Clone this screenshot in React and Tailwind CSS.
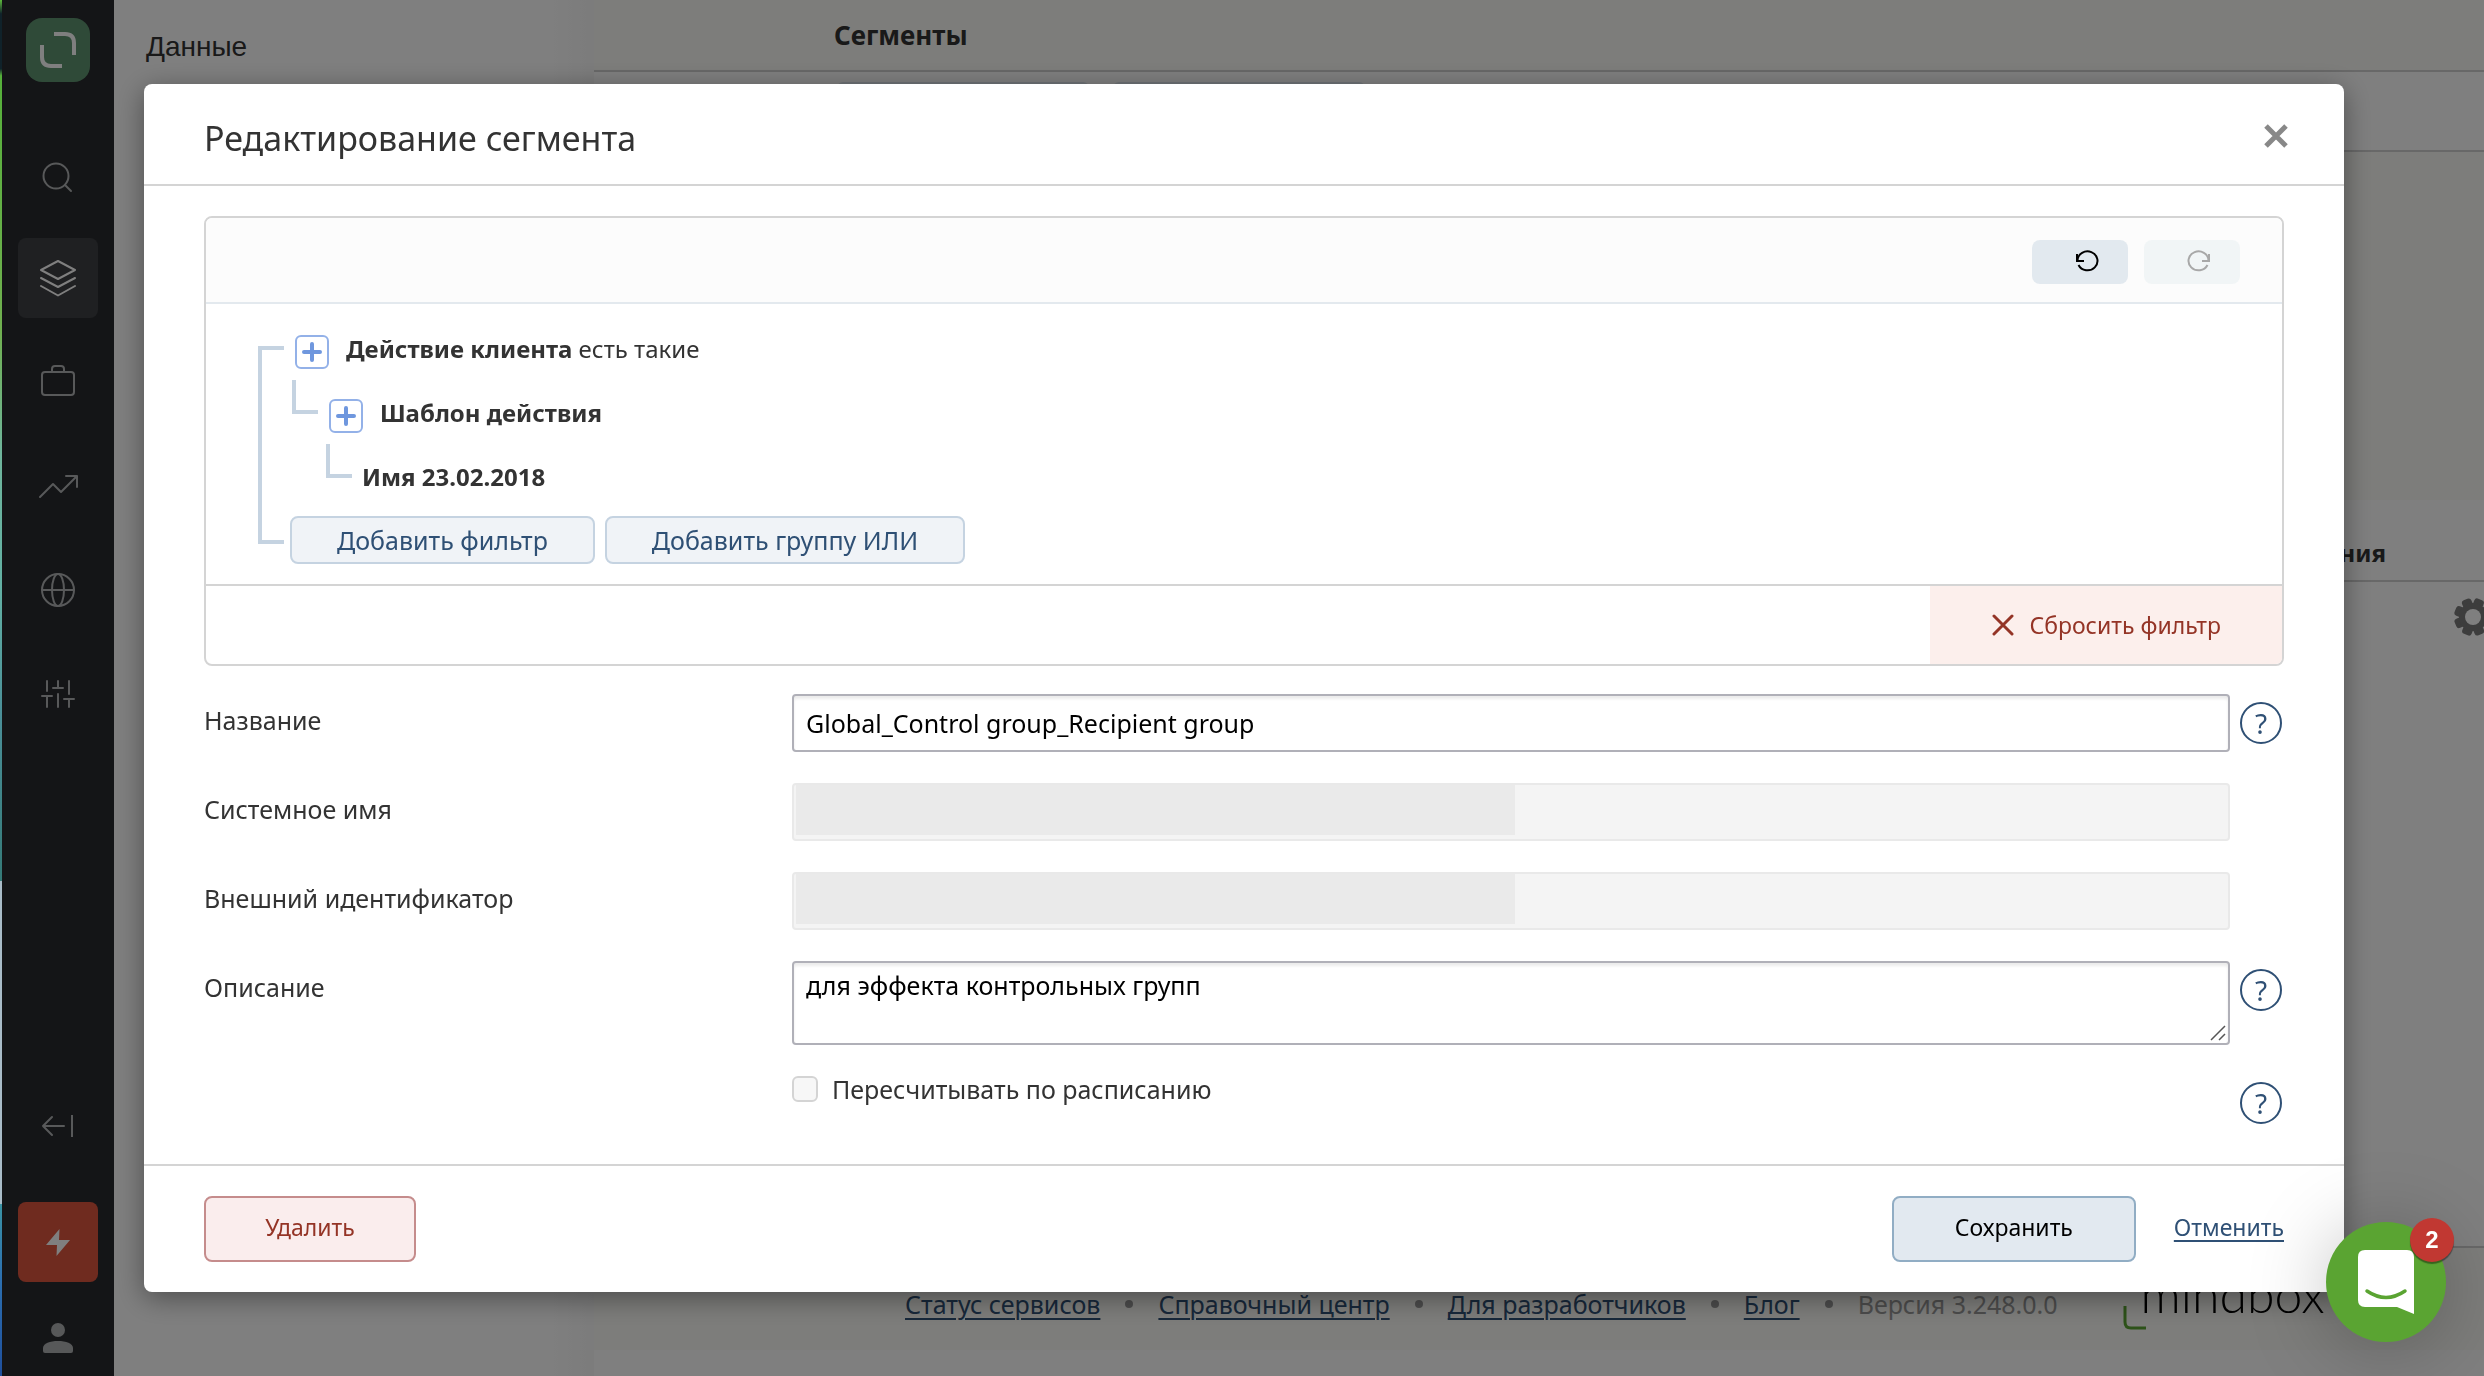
import React from 'react';

function Icon({ size = 40, stroke = '#b0b2b4', width = 2, children }) {
  return (
    <svg
      width={size}
      height={size}
      viewBox={`0 0 ${size} ${size}`}
      fill="none"
      stroke={stroke}
      strokeWidth={width}
      strokeLinecap="round"
      strokeLinejoin="round"
      aria-hidden="true"
    >
      {children}
    </svg>
  );
}

const NAV = [
  {
    label: 'Поиск',
    icon: (
      <Icon>
        <circle cx="18" cy="22" r="12.5" />
        <path d="M27 31l6 6" />
      </Icon>
    ),
  },
  {
    label: 'Данные',
    active: true,
    icon: (
      <Icon stroke="#ffffff">
        <path d="M20 3l17 9-17 9-17-9z" />
        <path d="M3 20l17 9 17-9" />
        <path d="M3 28l17 9.500 17-9.500" />
      </Icon>
    ),
  },
  {
    label: 'Кампании',
    icon: (
      <Icon>
        <rect x="4" y="10" width="32" height="23" rx="3" />
        <path d="M14 10V7a3 3 0 0 1 3-3h6a3 3 0 0 1 3 3v3" />
      </Icon>
    ),
  },
  {
    label: 'Отчёты',
    icon: (
      <Icon>
        <path d="M2 31l13-13 8 8 15-15" />
        <path d="M28 10h11v11" />
      </Icon>
    ),
  },
  {
    label: 'Интеграции',
    icon: (
      <Icon>
        <circle cx="20" cy="20" r="16" />
        <ellipse cx="20" cy="20" rx="6" ry="16" />
        <path d="M4 20h32" />
      </Icon>
    ),
  },
  {
    label: 'Настройки',
    icon: (
      <Icon>
        <path d="M9 7v10M4 22h10M9 22v11" />
        <path d="M20 7v7M15 14h10M20 20v13" />
        <path d="M31 7v13M26 25h10M31 25v8" />
      </Icon>
    ),
  },
];

function Sidebar() {
  return (
    <aside className="flex w-[114px] shrink-0 flex-col items-center bg-[#282a2e] pb-[10px] pl-[2px] pt-[18px]">
      <a href="#home" aria-label="Mindbox" className="flex size-16 items-center justify-center rounded-[16px] bg-[#5e9470]">
        <svg width="38" height="38" viewBox="0 0 38 38" fill="none" stroke="#ffffff" strokeWidth="4" aria-hidden="true">
          <path d="M15 3h11q9 0 9 9v12" />
          <path d="M3 14v12q0 9 9 9h11" />
        </svg>
      </a>
      <nav className="mt-[52px] flex flex-col gap-6">
        {NAV.map((n) => (
          <button
            key={n.label}
            type="button"
            aria-label={n.label}
            className={
              n.active
                ? 'flex size-20 items-center justify-center rounded-lg bg-[#3e4044]'
                : 'flex size-20 items-center justify-center rounded-lg'
            }
          >
            {n.icon}
          </button>
        ))}
      </nav>
      <div className="mt-auto flex flex-col items-center">
        <button type="button" aria-label="Свернуть меню" className="flex size-20 items-center justify-center">
          <Icon>
            <path d="M5 20h21M14 11l-9 9 9 9" />
            <path d="M34 9v22" strokeLinecap="butt" />
          </Icon>
        </button>
        <button
          type="button"
          aria-label="Быстрые действия"
          className="mt-9 flex size-20 items-center justify-center rounded-lg bg-[#de563e]"
        >
          <svg width="24" height="27" viewBox="0 0 24 27" fill="#ffffff" aria-hidden="true">
            <path d="M13.500 0L0 16h11L10.500 27 24 11H13z" />
          </svg>
        </button>
        <button type="button" aria-label="Профиль" className="mt-7 flex h-14 w-20 items-center justify-center">
          <svg width="30" height="30" viewBox="0 0 30 30" fill="#aeb0b2" aria-hidden="true">
            <circle cx="15" cy="7" r="7" />
            <path d="M0 25c0-4.500 7-7 15-7s15 2.500 15 7v3q0 2-2 2H2q-2 0-2-2z" />
          </svg>
        </button>
      </div>
    </aside>
  );
}

function Gear() {
  return (
    <svg width="38" height="38" viewBox="0 0 38 38" aria-hidden="true">
      <g fill="#7a7a7a">
        {[0, 45, 90, 135].map((a) => (
          <rect key={a} x="14" y="0" width="10" height="38" rx="3" transform={`rotate(${a + 22} 19 19)`} />
        ))}
      </g>
      <circle cx="19" cy="19" r="11" fill="none" stroke="#7a7a7a" strokeWidth="6" />
      <circle cx="19" cy="19" r="8" fill="#ffffff" />
    </svg>
  );
}

const FOOTER_LINKS = ['Статус сервисов', 'Справочный центр', 'Для разработчиков', 'Блог'];

function Page() {
  return (
    <div className="flex min-h-screen">
      <Sidebar />
      <section className="w-[480px] shrink-0 bg-gradient-to-r from-white from-90% to-[#f8f8f8] px-8 pt-[29px]">
        <h2 className="font-['Liberation_Sans',sans-serif] text-[28px] leading-9 text-[#333333]">Данные</h2>
      </section>
      <main className="flex min-w-0 flex-1 flex-col bg-white">
        <header className="h-[72px] border-b-2 border-[#d0d0d0] bg-[#fafaf6] pl-60">
          <h1 className="text-[26px] font-bold leading-[70px] text-[#333333]">Сегменты</h1>
        </header>
        <div className="flex h-20 gap-6 border-b-2 border-[#d0d0d0] pl-[243px] pt-[10px]">
          <div className="h-14 w-[252px] rounded-md bg-[#dfe7ee]" />
          <div className="h-14 w-[252px] rounded-md bg-[#dfe7ee]" />
        </div>
        <div className="h-[348px] bg-[#fafaf6]" />
        <div className="flex h-[82px] items-center justify-end border-b-2 border-[#d0d0d0] pr-[98px] pt-[26px]">
          <span className="text-2xl font-bold text-[#333333]">ния</span>
        </div>
        <div className="flex justify-end pt-4">
          <button type="button" aria-label="Настройки таблицы" className="-mr-2">
            <Gear />
          </button>
        </div>
        <footer className="mt-auto border-t-2 border-[#d0d0d0] bg-white pb-[26px]">
          <div className="flex h-[102px] items-center gap-[25px] bg-[#fafaf6] pl-[311px] pt-[10px] text-[25px] leading-8">
            {FOOTER_LINKS.map((l) => (
              <React.Fragment key={l}>
                <a href="#footer" className="whitespace-nowrap text-[#2f5075] underline decoration-2 underline-offset-4">
                  {l}
                </a>
                <span className="size-2 rounded-full bg-[#999999]" />
              </React.Fragment>
            ))}
            <span className="whitespace-nowrap text-[#999999]">Версия 3.248.0.0</span>
            <a
              href="#mindbox"
              className="ml-10 flex items-end pb-5 font-['Lato',sans-serif] text-[50px] font-light leading-10 text-black"
            >
              <svg width="24" height="24" viewBox="0 0 24 24" fill="none" stroke="#5aa432" strokeWidth="3" className="-mb-4 -mr-1.5" aria-hidden="true">
                <path d="M2 0v16q0 6 6 6h15" />
              </svg>
              mindbox
            </a>
          </div>
        </footer>
      </main>
    </div>
  );
}

function PlusBox({ label }) {
  return (
    <button
      type="button"
      aria-label={label}
      className="flex size-[34px] items-center justify-center rounded-md border-2 border-[#93b1e8] bg-white"
    >
      <Icon size={20} stroke="#6f97de" width={4}>
        <path d="M10 2v16M2 10h16" />
      </Icon>
    </button>
  );
}

function Elbow() {
  return <span className="-mt-1 h-[34px] w-[26px] self-start border-b-4 border-l-4 border-[#c5d3e1]" />;
}

const FILTER_BUTTON = 'h-12 rounded-lg border-2 border-[#c5d3e1] bg-[#f0f3f7] px-[45px] pb-px';

function FilterBuilder() {
  return (
    <div className="overflow-hidden rounded-lg border-2 border-[#d4d4d4]">
      <div className="flex justify-end gap-4 border-b-2 border-[#e3e9ee] bg-[#fcfcfc] px-[42px] pb-[18px] pt-[22px]">
        <button type="button" aria-label="Отменить действие" className="flex h-11 w-24 items-center justify-center rounded-lg bg-[#e2e9ef] pl-[14px]">
          <Icon size={24} stroke="#000000" width={2}>
            <path d="M2 4v7h7" strokeLinecap="butt" strokeLinejoin="miter" />
            <path d="M2.500 10.500A10 9.500 0 1 1 3.500 15" strokeLinecap="butt" />
          </Icon>
        </button>
        <button
          type="button"
          disabled
          aria-label="Повторить действие"
          className="flex h-11 w-24 items-center justify-center rounded-lg bg-[#f1f5f6] pl-[14px]"
        >
          <Icon size={24} stroke="#a8a8a8" width={2}>
            <path d="M22 4v7h-7" strokeLinecap="butt" strokeLinejoin="miter" />
            <path d="M21.500 10.500A10 9.500 0 1 0 20.500 15" strokeLinecap="butt" />
          </Icon>
        </button>
      </div>

      <div className="flex pl-[52px]">
        <span className="mb-10 mt-[42px] w-[26px] shrink-0 border-y-4 border-l-4 border-[#c5d3e1]" />
        <div className="pb-5 pl-[6px] pt-4 text-2xl text-[#333333]">
          <div className="flex h-16 items-center gap-[17px] pl-[5px]">
            <PlusBox label="Добавить к действию клиента" />
            <span className="pb-[6px]">
              <b>Действие клиента</b> есть такие
            </span>
          </div>
          <div className="flex h-16 items-center pl-[2px]">
            <Elbow />
            <span className="ml-[11px] flex">
              <PlusBox label="Добавить к шаблону действия" />
            </span>
            <b className="ml-[17px] pb-[6px]">Шаблон действия</b>
          </div>
          <div className="flex h-16 items-center pl-9">
            <Elbow />
            <b className="ml-[10px] pb-[6px]">Имя 23.02.2018</b>
          </div>
          <div className="mt-1 flex gap-[10px] text-[25px] leading-7 text-[#2f5075]">
            <button type="button" className={FILTER_BUTTON}>
              Добавить фильтр
            </button>
            <button type="button" className={FILTER_BUTTON}>
              Добавить группу ИЛИ
            </button>
          </div>
        </div>
      </div>

      <div className="flex justify-end border-t-2 border-[#d4d4d4]">
        <button type="button" className="flex h-[78px] items-center gap-4 bg-[#fcefec] pl-[62px] pr-[61px] text-[23px] text-[#943426]">
          <Icon size={22} stroke="#943426" width={3}>
            <path d="M2 2l18 18M20 2L2 20" />
          </Icon>
          Сбросить фильтр
        </button>
      </div>
    </div>
  );
}

function Help() {
  return (
    <button
      type="button"
      aria-label="Справка"
      className="flex size-[42px] items-center justify-center rounded-full border-2 border-[#2f5075] text-[28px] leading-8 text-[#2f5075]"
    >
      ?
    </button>
  );
}

const INPUT =
  'block h-[58px] w-full rounded-[4px] border-2 border-[#b0b0b8] bg-white px-3 text-[25px] text-black shadow-[inset_0_3px_3px_rgba(0,0,0,0.08)] outline-none';
const LABEL = 'h-[52px] leading-[52px]';

function LockedInput({ id }) {
  return (
    <div className="relative mr-[10px]">
      <input id={id} disabled className="block h-[58px] w-full rounded-[4px] border-2 border-[#e9e9e9] bg-[#f4f4f4]" />
      <span className="absolute bottom-[6px] left-1 top-[2px] w-1/2 bg-[#eaeaea]" />
    </div>
  );
}

function Modal() {
  return (
    <div
      role="dialog"
      aria-modal="true"
      aria-labelledby="dialog-title"
      className="rounded-lg bg-white text-[#333333] shadow-[0_6px_28px_rgba(0,0,0,0.4)]"
    >
      <div className="flex h-[102px] items-center justify-between border-b-2 border-[#d4d4d4] pl-[60px] pr-[54px] pt-2">
        <h2 id="dialog-title" className="text-[34px] leading-[48px]">
          Редактирование сегмента
        </h2>
        <button type="button" aria-label="Закрыть" className="flex items-center pb-1">
          <Icon size={28} stroke="#888888" width={5}>
            <path d="M4 4l20 20M24 4L4 24" strokeLinecap="butt" />
          </Icon>
        </button>
      </div>

      <div className="px-[60px] pb-10 pt-[30px]">
        <FilterBuilder />
        <form className="mt-7 grid grid-cols-[588px_1fr_44px] gap-y-[31px] text-[25px]" onSubmit={(e) => e.preventDefault()}>
          <label htmlFor="name" className={LABEL}>
            Название
          </label>
          <div className="pr-[10px]">
            <input id="name" className={INPUT} defaultValue="Global_Control group_Recipient group" />
          </div>
          <div className="pt-2">
            <Help />
          </div>

          <label htmlFor="system" className={LABEL}>
            Системное имя
          </label>
          <LockedInput id="system" />
          <span />

          <label htmlFor="external" className={LABEL}>
            Внешний идентификатор
          </label>
          <LockedInput id="external" />
          <span />

          <label htmlFor="description" className={LABEL}>
            Описание
          </label>
          <div className="relative mr-[10px]">
            <textarea
              id="description"
              rows={2}
              defaultValue="для эффекта контрольных групп"
              className="block w-full resize-none rounded-[4px] border-2 border-[#b0b0b8] px-3 pb-[10px] pt-[6px] text-[25px] leading-8 text-black shadow-[inset_0_3px_3px_rgba(0,0,0,0.08)] outline-none"
            />
            <svg width="16" height="16" viewBox="0 0 16 16" stroke="#555555" strokeWidth="1.500" className="absolute bottom-1 right-1" aria-hidden="true">
              <path d="M1 15L15 1M9 15l6-6" />
            </svg>
          </div>
          <div className="pt-2">
            <Help />
          </div>

          <span />
          <label className="flex items-center gap-[14px] self-start leading-[26px]">
            <input
              type="checkbox"
              className="size-[26px] appearance-none rounded-[6px] border-2 border-[#d4d4d4] bg-[#f7f7f7]"
            />
            Пересчитывать по расписанию
          </label>
          <div className="pt-[6px]">
            <Help />
          </div>
        </form>
      </div>

      <div className="flex items-center border-t-2 border-[#d4d4d4] px-[60px] py-[30px] text-[23px]">
        <button type="button" className="h-[66px] w-[212px] rounded-lg border-2 border-[#c58c8c] bg-[#faeded] pb-1 text-[#943426]">
          Удалить
        </button>
        <button type="button" className="ml-auto h-[66px] w-[244px] rounded-lg border-2 border-[#91adc4] bg-[#e2e9f0] pb-1 text-black">
          Сохранить
        </button>
        <a href="#cancel" className="ml-[38px] pb-1 text-[#2f5075] underline decoration-2 underline-offset-4">
          Отменить
        </a>
      </div>
    </div>
  );
}

function Chat() {
  return (
    <button
      type="button"
      aria-label="Открыть чат"
      className="fixed bottom-[34px] right-[38px] flex size-[120px] items-center justify-center rounded-full bg-[#5aa432] shadow-[0_6px_80px_rgba(0,0,0,0.25)]"
    >
      <svg width="56" height="64" viewBox="0 0 56 64" fill="none" aria-hidden="true">
        <path d="M7 0h42q7 0 7 7v57l-17-7H7q-7 0-7-7V7q0-7 7-7z" fill="#ffffff" />
        <path d="M9 41q19 13 38 0" stroke="#5aa432" strokeWidth="3.500" strokeLinecap="round" />
      </svg>
      <span className="absolute -right-2 -top-1 flex size-11 items-center justify-center rounded-full bg-[#c13832] font-['Liberation_Sans',sans-serif] text-2xl font-bold text-white shadow-[0_2px_1px_rgba(0,0,0,0.4)]">
        2
      </span>
    </button>
  );
}

const EDGE = {
  background:
    'linear-gradient(to bottom, #5cb83c 0%, #10222a 1%, #10222a 5%, #55b03a 5.500%, #70b050 24%, #6fb59c 33%, #62b0a4 43%, #4a8f98 52%, #357a78 64%, #a9bcc8 64%, #a9bcc8 87.500%, #3a93a4 87.500%, #2c6fb0 93%, #1f4f9c 100%)',
};

export default function App() {
  return (
    <div className="relative font-['Noto_Sans',sans-serif]">
      <Page />
      <div className="fixed inset-0 overflow-auto bg-black/50 pb-8 pl-36 pr-[140px] pt-[84px]">
        <Modal />
      </div>
      <div className="fixed inset-y-0 left-0 w-[2px]" style={EDGE} />
      <Chat />
    </div>
  );
}
